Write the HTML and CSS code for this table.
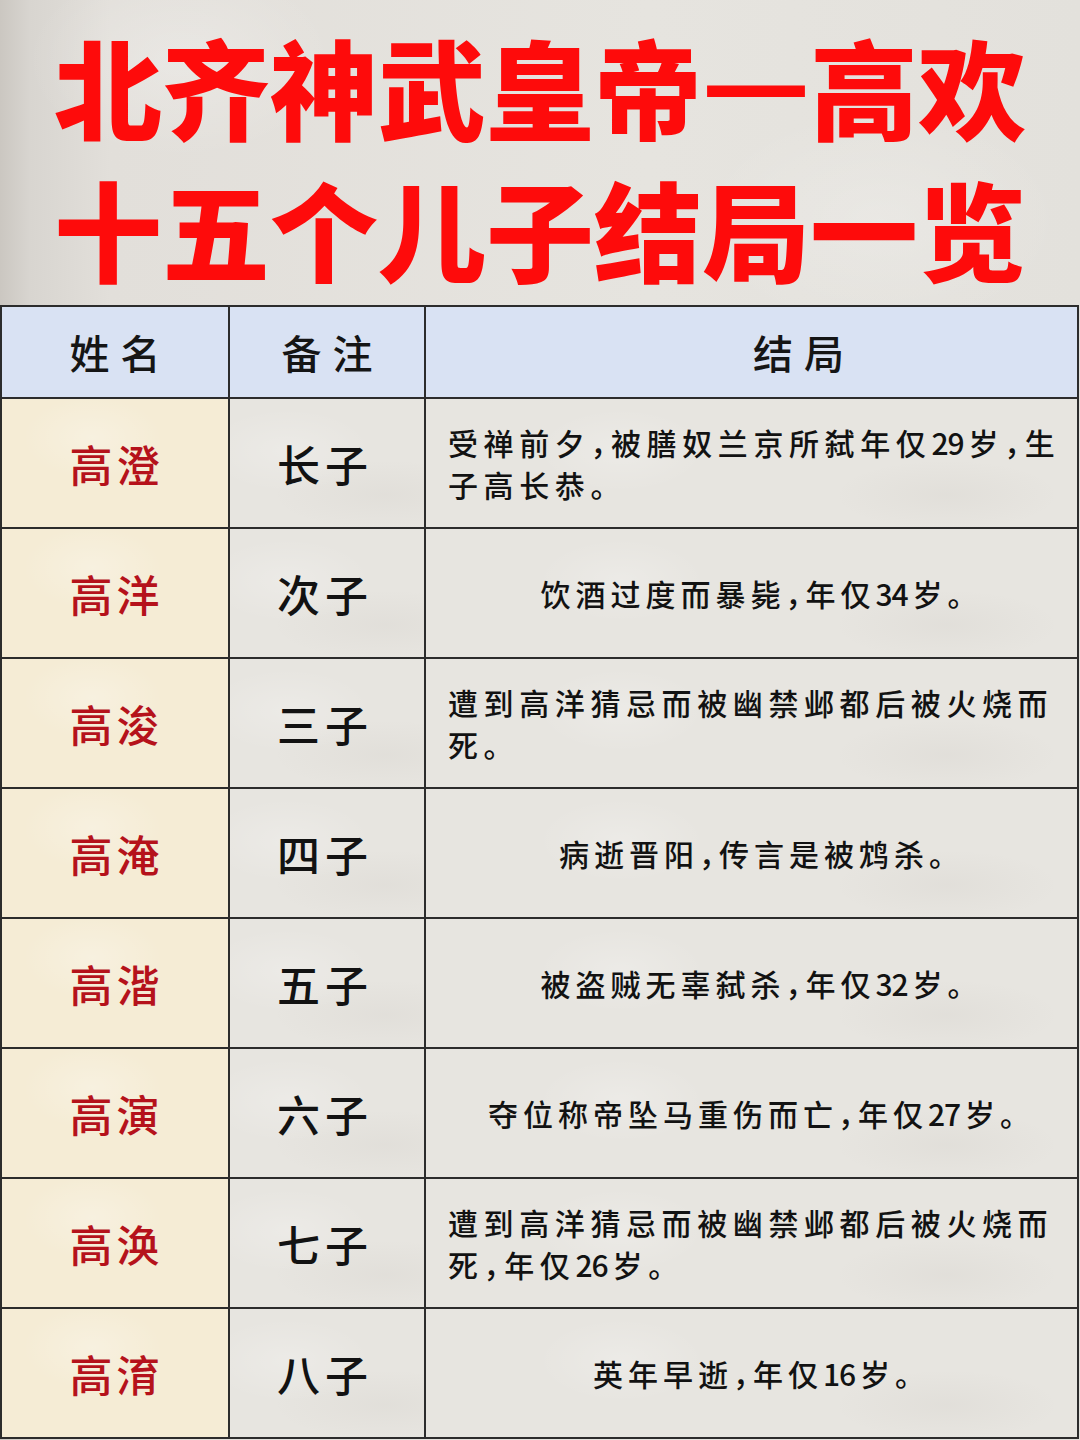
FILE: index.html
```html
<!DOCTYPE html>
<html lang="zh-CN">
<head>
<meta charset="utf-8">
<title>北齐神武皇帝—高欢十五个儿子结局一览</title>
<link rel="stylesheet" href="styles.css">
</head>
<body>
<div class="page">
  <h1 class="title">
    <span class="title-line">北齐神武皇帝<span class="dash">—</span>高欢</span>
    <span class="title-line">十五个儿子结局一览</span>
  </h1>
  <div class="table">
    <div class="cell head">姓名</div>
    <div class="cell head">备注</div>
    <div class="cell head head-result">结局</div>

    <div class="cell name">高澄</div>
    <div class="cell rank">长子</div>
    <div class="cell result multi"><p class="text">受禅前夕，被膳奴兰京所弑年仅<span class="num">29</span>岁，生<br>子高长恭。</p></div>

    <div class="cell name">高洋</div>
    <div class="cell rank">次子</div>
    <div class="cell result"><p class="text">饮酒过度而暴毙，年仅<span class="num">34</span>岁。</p></div>

    <div class="cell name">高浚</div>
    <div class="cell rank">三子</div>
    <div class="cell result multi"><p class="text">遭到高洋猜忌而被幽禁邺都后被火烧而<br>死。</p></div>

    <div class="cell name">高淹</div>
    <div class="cell rank">四子</div>
    <div class="cell result"><p class="text">病逝晋阳，传言是被鸩杀。</p></div>

    <div class="cell name">高湝</div>
    <div class="cell rank">五子</div>
    <div class="cell result"><p class="text">被盗贼无辜弑杀，年仅<span class="num">32</span>岁。</p></div>

    <div class="cell name">高演</div>
    <div class="cell rank">六子</div>
    <div class="cell result"><p class="text">夺位称帝坠马重伤而亡，年仅<span class="num">27</span>岁。</p></div>

    <div class="cell name">高涣</div>
    <div class="cell rank">七子</div>
    <div class="cell result multi"><p class="text">遭到高洋猜忌而被幽禁邺都后被火烧而<br>死，年仅<span class="num">26</span>岁。</p></div>

    <div class="cell name">高淯</div>
    <div class="cell rank">八子</div>
    <div class="cell result"><p class="text">英年早逝，年仅<span class="num">16</span>岁。</p></div>
  </div>
</div>
</body>
</html>
```

FILE: styles.css
```css
* {
  box-sizing: border-box;
  margin: 0;
  padding: 0;
}

html,
body {
  width: 1080px;
  height: 1440px;
  overflow: hidden;
}

body {
  background: #e2dfda;
  font-family: "Noto Sans CJK SC", "Noto Sans", sans-serif;
}

.page {
  height: 1440px;
  background:
    radial-gradient(ellipse 220px 140px at 180px 60px, rgba(255, 255, 255, 0.25), transparent 70%),
    radial-gradient(ellipse 260px 160px at 880px 220px, rgba(255, 255, 255, 0.2), transparent 70%),
    linear-gradient(90deg, #cbc7c1 0, #d8d5d0 30px, #e2dfda 110px, #e6e4df 60%, #e3e1dc 100%);
}

.title {
  display: flex;
  flex-direction: column;
  align-items: center;
  padding: 14px 0 7px;
  font-size: 108px;
  line-height: 142px;
  font-weight: 900;
  color: #fe0b0b;
  letter-spacing: 0;
}

.title-line {
  display: block;
  white-space: nowrap;
}

.dash {
  -webkit-text-stroke: 6px #fe0b0b;
}

.table {
  display: grid;
  grid-template-columns: 226px 194px 651px;
  grid-template-rows: 90px repeat(8, 128px);
  gap: 2px;
  padding: 2px;
  width: 1079px;
  background: #2c2c2c;
}

.cell {
  display: flex;
  align-items: center;
  justify-content: center;
  white-space: nowrap;
  background:
    radial-gradient(ellipse 120px 60px at 30% 40%, rgba(255, 255, 255, 0.22), transparent 70%),
    radial-gradient(ellipse 160px 50px at 80% 75%, rgba(120, 110, 100, 0.05), transparent 70%),
    #e7e5e0;
  color: #121212;
}

.head {
  background: #d9e2f3;
  font-size: 40px;
  font-weight: 500;
  letter-spacing: 11px;
  padding-left: 11px;
  color: #151515;
}

.head-result {
  padding-left: 105px;
}

.name {
  background:
    radial-gradient(ellipse 100px 60px at 40% 30%, rgba(255, 255, 255, 0.25), transparent 70%),
    #f5ecd5;
  color: #b5121b;
  font-size: 43px;
  font-weight: 500;
  letter-spacing: 4px;
  padding-left: 3px;
}

.rank {
  font-size: 43px;
  font-weight: 500;
  letter-spacing: 5px;
  padding-left: 0;
  padding-right: 4px;
}

.result {
  font-size: 30px;
  line-height: 42px;
  font-weight: 500;
  letter-spacing: 5px;
  padding-left: 5px;
  font-feature-settings: "halt";
}

.text {
  white-space: nowrap;
}

.num {
  letter-spacing: -1px;
  margin-right: 5px;
}

.result.multi {
  justify-content: flex-start;
  padding-left: 22px;
  letter-spacing: 5.6px;
}
```
